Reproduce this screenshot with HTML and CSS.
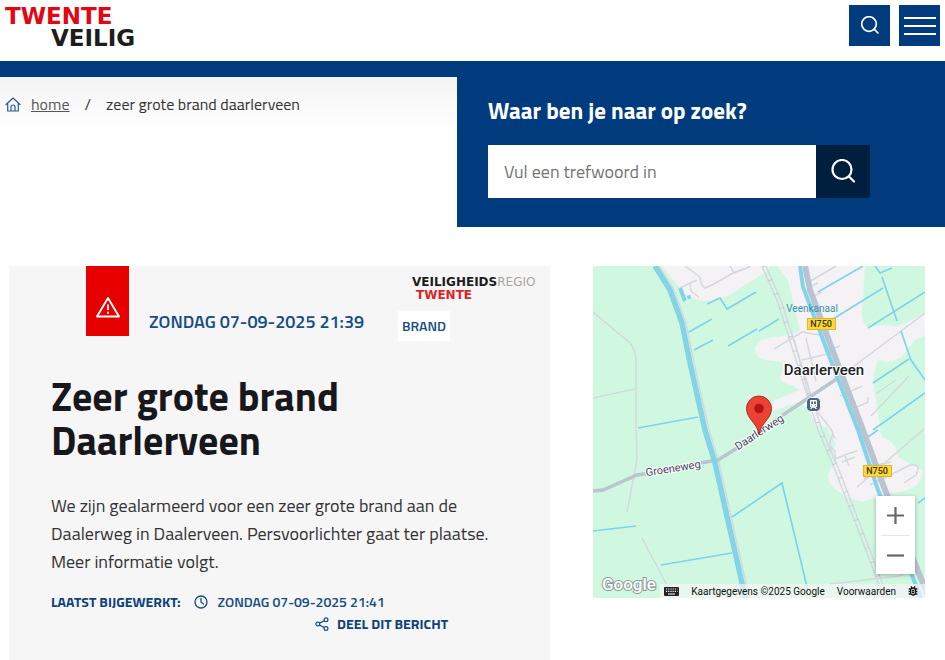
FILE: index.html
```html
<!DOCTYPE html>
<html lang="nl">
<head>
<meta charset="utf-8">
<meta name="viewport" content="width=device-width, initial-scale=1">
<title>Zeer grote brand Daarlerveen - Twente Veilig</title>
<link rel="stylesheet" href="styles.css">
</head>
<body>
<header class="site-header">
  <a class="logo" href="#"><span class="logo-top">TWENTE</span><span class="logo-bottom">VEILIG</span></a>
  <div class="header-actions">
    <button class="square-button" type="button" aria-label="Zoeken">
      <svg width="20" height="20" viewBox="0 0 20 20" fill="none" stroke="#fff" stroke-width="1.7" stroke-linecap="round"><circle cx="9" cy="8" r="7.3"/><path d="M14.4 13.4 18 17"/></svg>
    </button>
    <button class="square-button" type="button" aria-label="Menu">
      <svg width="32" height="20" viewBox="0 0 32 20" stroke="#fff" stroke-width="2"><path d="M0 2h32M0 10h32M0 18h32"/></svg>
    </button>
  </div>
</header>

<section class="intro">
  <nav class="breadcrumb" aria-label="Kruimelpad">
    <svg width="16" height="15" viewBox="0 0 16 15" fill="none" stroke="#2a5b93" stroke-width="1.2" stroke-linecap="round" stroke-linejoin="round"><path d="M1 7.5 8 1l7 6.5M2.7 6v8h10.600V6M6 14V9.500q0-1.500 2-1.500t2 1.500V14"/></svg>
    <a href="#">home</a>
    <span class="slash">/</span>
    <span>zeer grote brand daarlerveen</span>
  </nav>
  <form class="search">
    <label for="keyword">Waar ben je naar op zoek?</label>
    <div class="search-row">
      <input id="keyword" type="text" placeholder="Vul een trefwoord in">
      <button type="button" aria-label="Zoek">
        <svg width="26" height="26" viewBox="0 0 26 26" fill="none" stroke="#fff" stroke-width="2.200" stroke-linecap="round"><circle cx="12" cy="10.500" r="9.500"/><path d="M19 17.500 24 22.500"/></svg>
      </button>
    </div>
  </form>
</section>

<main class="content">
  <article class="card">
    <div class="card-head">
      <span class="alert-tag">
        <svg width="26" height="22" viewBox="0 0 26 22" fill="none" stroke="#fff" stroke-width="1.900" stroke-linejoin="round"><path d="M13 2 24 20.500H2z"/><path d="M13 8.500v5.500M13 15.800v2"/></svg>
      </span>
      <time class="date">ZONDAG 07-09-2025 21:39</time>
      <div class="source">
        <div class="region-logo">
          <span>VEILIGHEIDS<span class="faded">REGIO</span></span>
          <span class="region-name">TWENTE</span>
        </div>
        <span class="chip">BRAND</span>
      </div>
    </div>
    <h1>Zeer grote brand Daarlerveen</h1>
    <p class="message">We zijn gealarmeerd voor een zeer grote brand aan de Daalerweg in Daalerveen. Persvoorlichter gaat ter plaatse. Meer informatie volgt.</p>
    <div class="updated">
      <strong>LAATST BIJGEWERKT:</strong>
      <svg width="14" height="14" viewBox="0 0 14 14" fill="none" stroke="#164d86" stroke-width="1.300" stroke-linecap="round"><circle cx="7" cy="7" r="6"/><path d="M7 3.500V7l2.500 2"/></svg>
      <time>ZONDAG 07-09-2025 21:41</time>
    </div>
    <a class="share" href="#">
      <svg width="14" height="14" viewBox="0 0 14 14" fill="none" stroke="#164d86" stroke-width="1.200"><circle cx="2.800" cy="7" r="1.900"/><circle cx="11" cy="2.800" r="1.900"/><circle cx="11" cy="11.500" r="1.900"/><path d="m4.500 6.100 4.800-2.400M4.500 8l4.800 2.600"/></svg>
      DEEL DIT BERICHT
    </a>
  </article>

  <section class="map" aria-label="Kaart">
    <svg class="map-art" viewBox="0 0 332 332" preserveAspectRatio="xMidYMid slice">
      <rect width="332" height="332" fill="#d0f8e1"/>
      <g fill="#f4f2f4">
        <path d="M69 0 87 22Q91 30 97 31 112 38 124 33 138 31 147 22L165 11Q172 7 178 0z"/>
        <path d="M184 0 195 14 207 64Q196 71 182 71 166 72 162 82 163 93 173 94L189 96Q191 103 187 111 187 117 199 119L207 124 182 134 176 146 207 136Q221 148 222 160L234 161 242 177Q239 190 242 198 232 207 236 216 246 230 269 236L295 227Q318 226 325 217 331 210 329 204L305 191Q305 180 295 174 285 170 287 161L282 127Q278 110 285 94 296 99 309 91L322 74 332 69V47L305 61Q292 57 275 61 268 57 269 44L272 0z"/>
      </g>
      <g fill="none" stroke="#d3d9df" stroke-width="1.500">
        <path d="M0 46 37 77Q43 84 43 94V164L44 194 34 246M0 132 42 123M49 272 77 325"/>
        <path d="M92 0 107 11Q108 20 112 22 120 19 140 7L154 2 158 0M137 0 142 8M87 22 97 17 104 14M97 17l1 8 8 6"/>
        <path d="M66 0 81 24 93 57 101 97 116 164 126 197 153 317 157 332"/>
        <path d="M169 0 185 37 202 91 225 164 242 204 269 274 291 332M173 0 189 37 206 91 229 164 246 204 273 274 295 332"/>
        <path d="M245 112 332 47M181 83 209 66 226 69M201 73l17 65 20 25 4 10M209 94l34-8M213 72l10 43M216 16l27-16M221 30l8-4M217 21l8-4M232 86l15-6M247 130l22-10M255 145l20-9v-5M259 151l8-3M278 150 316 110M240 168l-4 11 6 6 0 8 12-5 10-3M249 196l13-5M252 190l4 10M264 221l67-58M271 213l17-15 10-2M277 219l40-20q12-2 6 10l-12 8M237 318l70-8 13-8M284 127 303 114"/>
      </g>
      <path d="m169 0 16 37 17 54 23 73 17 40 27 70 22 58" transform="translate(2)" fill="none" stroke="#c7cdd3" stroke-width="5" stroke-dasharray="1 14"/>
      <g fill="none" stroke="#7fd3ea" stroke-width="1.700">
        <path d="M114 38 127 32 134 43 163 26M96 66 119 53M101 84 120 74M135 80 164 63M166 65 186 53M45 162 105 151M0 265 43 260M68 299 139 287M139 251 189 217 215 325"/>
        <path d="M225 26 270 0M240 53 290 22M282 0 287 7 299 2M289 11 304 55M275 62 332 26M308 65 318 94 332 114M280 117 316 93M280 164 332 127M272 173 285 164M325 237 332 232"/>
        <path d="M87 22 92 35" stroke-width="4"/>
      </g>
      <circle cx="96" cy="31" r="2" fill="#7fd3ea"/>
      <path d="M0 225 10 224 44 209 57 207 107 197 125 194 144 182 190 149 245 112" fill="none" stroke="#bac5ce" stroke-width="3.500"/>
      <path d="M212 0 217 24 247 104 270 164 292 224 336 332" fill="none" stroke="#b9c4d3" stroke-width="6"/>
      <g fill="none" stroke="#84d4e8">
        <path d="M62 0 77 24 89 57 97 97 112 164 122 197 149 317 152 332" stroke-width="5.500"/>
        <path d="M207 0 210 21 243 108 265 164 285 224 328 332" stroke-width="4"/>
      </g>
      <g class="map-label" text-anchor="middle">
        <text class="water" x="219" y="46">Veenkanaal</text>
        <text x="80" y="206" transform="rotate(-9 80 202)">Groeneweg</text>
        <text x="166" y="170" transform="rotate(-33 166 166)">Daarlerweg</text>
        <text class="town" x="231" y="109">Daarlerveen</text>
      </g>
      <g class="road-label" text-anchor="middle">
        <rect x="214.500" y="52.500" width="28" height="11" fill="#fbd83c" stroke="#e2b52a"/>
        <text x="228" y="61">N750</text>
        <rect x="270.500" y="199.500" width="28" height="11" fill="#fbd83c" stroke="#e2b52a"/>
        <text x="284" y="208">N750</text>
      </g>
      <g transform="translate(213 131)"><rect x=".5" y=".5" width="14" height="14" rx="4" fill="#4d6383" stroke="#fff"/><path d="M5 3h5q1 0 1 1v6H9.800l1 2H9.500l-.8-1.200H6.300L5.500 12H4.200l1-2H4V4q0-1 1-1" fill="#fff"/><path d="M5.200 4.500h1.900v2.500H5.200zM8 4.500h1.900v2.500H8zM5.200 8.200h1v1h-1zM8.900 8.200h1v1h-1z" fill="#4d6383"/></g>
      <path d="M166 168.500C164.500 157 153.500 153 153.500 142.500a12.500 12.500 0 0 1 25 0C178.500 153 167.500 157 166 168.500z" fill="#ea4335" stroke="#b9271f"/>
      <circle cx="166" cy="142.500" r="4.800" fill="#b31412"/>
      <text class="google" x="9" y="324">Google</text>
    </svg>
    <div class="zoom-control">
      <button type="button" aria-label="Inzoomen"><svg width="17" height="17" viewBox="0 0 17 17" stroke="#666" stroke-width="2.200"><path d="M0 8.500h17M8.500 0v17"/></svg></button>
      <button type="button" aria-label="Uitzoomen"><svg width="17" height="17" viewBox="0 0 17 17" stroke="#666" stroke-width="2.200"><path d="M0 8.500h17"/></svg></button>
    </div>
    <div class="attribution">
      <button type="button" aria-label="Sneltoetsen"><svg width="15" height="9" viewBox="0 0 15 9"><rect width="15" height="9" rx="1" fill="#222"/><path d="M2 2h11.500M2 4.300h11.500" stroke="#fff" stroke-width="1.200" stroke-dasharray="1.200 1"/><path d="M4 7h7" stroke="#fff"/></svg></button>
      <span>Kaartgegevens ©2025 Google</span>
      <a href="#">Voorwaarden</a>
      <a href="#" aria-label="Fout melden"><svg width="10" height="10" viewBox="0 0 10 10" fill="none" stroke="#111" stroke-width="1.300"><rect x="2.700" y="2" width="4.600" height="7" rx="2"/><path d="M3 .3l1 1.700M7 .3 6 2M.7 3h2M.7 5.500h2M.7 8h2M7.300 3h2M7.300 5.500h2M7.300 8h2M4 4.500h2M4 6.500h2"/></svg></a>
    </div>
  </section>
</main>
</body>
</html>
```
FILE: styles.css
```css
* { box-sizing: border-box; }

body {
  margin: 0;
  background: #fff;
  color: #333;
  font-family: "Titillium Web", Roboto, "Liberation Sans", sans-serif;
  font-size: 16px;
}

button { border: 0; padding: 0; font: inherit; cursor: pointer; }
a { color: inherit; text-decoration: none; }
svg { display: block; flex: none; }

.site-header {
  display: flex;
  justify-content: space-between;
  align-items: flex-start;
  height: 77px;
  padding: 5px 5px 0;
  border-bottom: 16px solid #003c7d;
}

.logo {
  display: flex;
  flex-direction: column;
  font-family: "DejaVu Sans", sans-serif;
  font-size: 23px;
  line-height: 22px;
  font-weight: 700;
}
.logo-top { color: #e30613; }
.logo-bottom { color: #1d1d1b; padding-left: 46px; }

.header-actions { display: flex; gap: 9px; }
.square-button {
  display: grid;
  place-items: center;
  width: 41px;
  height: 41px;
  background: #003c7d;
}

.intro {
  display: grid;
  grid-template-columns: 457fr 488fr;
  align-items: start;
}

.breadcrumb {
  display: flex;
  align-items: center;
  height: 56px;
  padding: 0 0 2px 5px;
  background: linear-gradient(#f4f4f4, #fff);
}
.breadcrumb a { margin-left: 10px; text-decoration: underline; color: #555; }
.breadcrumb .slash { margin: 0 15px; }

.search {
  padding: 18px 75px 29px 31px;
  background: #003c7d;
  color: #fff;
}
.search label {
  display: block;
  margin-bottom: 18px;
  font-size: 23px;
  line-height: 32px;
  font-weight: 700;
}
.search-row { display: flex; height: 53px; }
.search input {
  flex: 1;
  min-width: 0;
  border: 0;
  border-radius: 0;
  padding: 0 16px;
  background: #fff;
  font: inherit;
  font-size: 18px;
}
.search input::placeholder { color: #757575; }
.search button {
  display: grid;
  place-items: center;
  width: 54px;
  background: #001e3e;
}

.content {
  display: grid;
  grid-template-columns: 541fr 332fr;
  gap: 43px;
  align-items: start;
  padding: 39px 20px 0 9px;
}

.card {
  min-height: 394px;
  padding: 0 42px;
  background: #f6f6f6;
}
.card-head {
  display: grid;
  grid-template-columns: 43px 1fr 110px;
  gap: 20px;
  align-items: start;
  padding-left: 35px;
}
.alert-tag {
  display: grid;
  place-items: center;
  height: 70px;
  padding-top: 12px;
  background: #e60000;
}
.date {
  padding-top: 42px;
  color: #164d86;
  font-size: 18px;
  line-height: 28px;
  font-weight: 600;
  white-space: nowrap;
}
.source { padding-top: 10px; }
.region-logo {
  display: flex;
  flex-direction: column;
  padding-left: 14px;
  color: #1d1d1b;
  font-family: "DejaVu Sans", sans-serif;
  font-size: 12px;
  line-height: 13px;
  font-weight: 700;
  white-space: nowrap;
}
.region-name { color: #e01f26; padding-left: 4px; }
.faded { color: #aaa59e; font-weight: 400; }
.chip {
  display: inline-block;
  margin-top: 9px;
  padding: 0 4px;
  background: #fff;
  color: #164d86;
  font-size: 14px;
  line-height: 30px;
  font-weight: 600;
}

h1 {
  max-width: 400px;
  margin: 34px 0 0;
  color: #16181c;
  font-size: 40px;
  line-height: 44px;
  font-weight: 700;
}
.message {
  margin: 29px 0 15px;
  font-size: 18px;
  line-height: 28px;
}
.updated, .share {
  display: flex;
  align-items: center;
  color: #164d86;
  font-size: 14px;
  line-height: 22px;
  font-weight: 600;
}
.updated svg { margin: 0 9px 0 14px; }
.updated strong, .share { font-weight: 700; color: #0d427c; }
.share { justify-content: flex-end; gap: 8px; padding-right: 60px; }

.map {
  position: relative;
  overflow: hidden;
  aspect-ratio: 1;
  font-family: Roboto, sans-serif;
}
.map-art { width: 100%; height: 100%; }
.map-label text {
  fill: #3c4858;
  stroke: #fff;
  stroke-width: 2px;
  paint-order: stroke;
  font-size: 11px;
}
.map-label .water { fill: #3993ad; font-size: 10px; stroke-width: 0; }
.map-label .town { fill: #202124; font-size: 15px; font-weight: 500; }
.road-label text { fill: #3c3500; font-size: 9px; font-weight: 500; }
.google {
  fill: #fff;
  stroke: #8d9c94;
  stroke-width: 2px;
  paint-order: stroke;
  font-size: 17px;
  font-weight: 500;
}

.zoom-control {
  position: absolute;
  right: 10px;
  bottom: 24px;
  width: 39px;
  padding: 0 5px;
  background: #fff;
  box-shadow: 0 1px 4px rgba(0, 0, 0, .3);
}
.zoom-control button {
  display: grid;
  place-items: center;
  width: 100%;
  height: 39px;
  background: none;
}
.zoom-control button + button { border-top: 1px solid #e6e6e6; }

.attribution {
  position: absolute;
  right: 0;
  bottom: 0;
  display: flex;
  align-items: center;
  gap: 12px;
  height: 14px;
  padding: 0 7px 0 4px;
  background: rgba(245, 245, 245, .7);
  color: #111;
  font-size: 10px;
  white-space: nowrap;
}
.attribution button { background: none; }
```
